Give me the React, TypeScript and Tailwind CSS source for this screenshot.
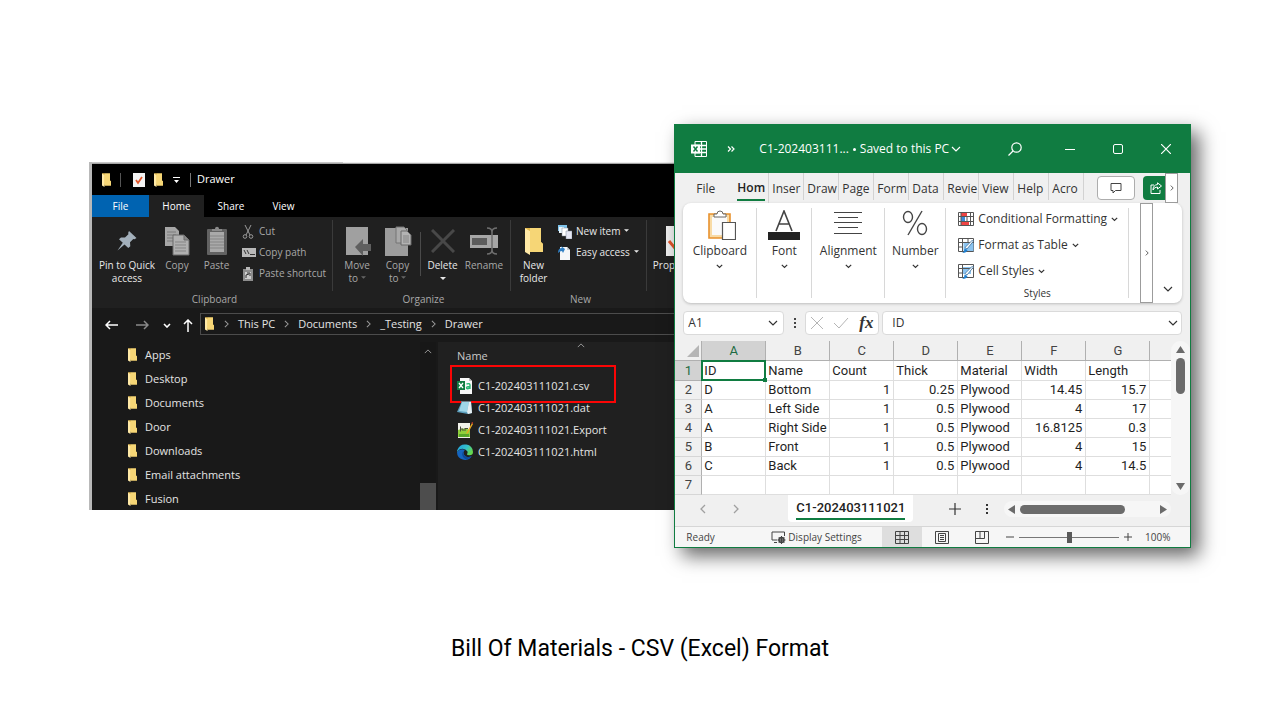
import { useState } from "react";
import type { ReactNode } from "react";

type BomRow = {
  id: string;
  name: string;
  count: string;
  thick: string;
  material: string;
  width: string;
  length: string;
};

const treeFolders = ["Apps", "Desktop", "Documents", "Door", "Downloads", "Email attachments", "Fusion"];

const breadcrumbs = ["This PC", "Documents", "_Testing", "Drawer"];

const ribbonTabs = ["Inser", "Draw", "Page", "Form", "Data", "Revie", "View", "Help", "Acro"];

const columns = ["A", "B", "C", "D", "E", "F", "G"];

const headings = ["ID", "Name", "Count", "Thick", "Material", "Width", "Length"];

const bomRows: BomRow[] = [
  { id: "D", name: "Bottom", count: "1", thick: "0.25", material: "Plywood", width: "14.45", length: "15.7" },
  { id: "A", name: "Left Side", count: "1", thick: "0.5", material: "Plywood", width: "4", length: "17" },
  { id: "A", name: "Right Side", count: "1", thick: "0.5", material: "Plywood", width: "16.8125", length: "0.3" },
  { id: "B", name: "Front", count: "1", thick: "0.5", material: "Plywood", width: "4", length: "15" },
  { id: "C", name: "Back", count: "1", thick: "0.5", material: "Plywood", width: "4", length: "14.5" }
];

/* ---------- shared glyphs ---------- */

function Chevron({ className, d = "M1 1l4 4 4-4" }: { className?: string; d?: string }) {
  return (
    <svg viewBox="0 0 10 6" className={className} fill="none" stroke="currentColor" strokeWidth="1.2">
      <path d={d} />
    </svg>
  );
}

function SmallChevron({ className }: { className?: string }) {
  return (
    <svg viewBox="0 0 7 5" className={`h-[5px] w-[7px] ${className}`} fill="none" stroke="currentColor" strokeWidth="1.2">
      <path d="M.8 .8l2.700 2.700L6.200 .8" />
    </svg>
  );
}

function ChevronRight({ className }: { className?: string }) {
  return (
    <svg viewBox="0 0 6 10" className={className} fill="none" stroke="currentColor" strokeWidth="1.3">
      <path d="M1 1l4 4-4 4" />
    </svg>
  );
}

function Caret({ className }: { className?: string }) {
  return (
    <svg viewBox="0 0 6 3" className={className} fill="currentColor">
      <path d="M0 0h6L3 3z" />
    </svg>
  );
}

function FolderIcon({ className }: { className?: string }) {
  return (
    <svg viewBox="0 0 20 28" className={className}>
      <path d="M1 1h16v14l2 2v8H6z" fill="#f2cd64" />
      <path d="M1 1l5 3v24l-5-3z" fill="#ffe9a6" />
      <path d="M6 4V1h11v14l2 2v8H6z" fill="#f6d676" />
      <path d="M1 1h5v3z" fill="#e3b94b" />
    </svg>
  );
}

/* ---------- file explorer ---------- */

function PinIcon() {
  return (
    <svg viewBox="0 0 20 20" className="size-5">
      <path d="M12 0l7.500 7-2 1.200-1.200-.2-3.300 3.200.3 4-2 1.800-3.800-3.600L.5 19.500l5.300-7.800L2 8.200 4 6.400l4 .2 3.400-3.300-.2-1.600z" fill="#a3b0bb" />
    </svg>
  );
}

function CopyIcon() {
  return (
    <svg viewBox="0 0 26 30" className="h-[30px] w-[26px]">
      <path d="M1 1h10l4 4v15H1z" fill="#a6a6a6" />
      <path d="M3 6h9M3 9h9M3 12h9M3 15h6" stroke="#7a7a7a" />
      <path d="M9 9h11l5 5v15H9z" fill="#b0b0b0" stroke="#6a6a6a" />
      <path d="M20 9v5h5" fill="#888" stroke="#6a6a6a" />
      <path d="M11 16h11M11 19h11M11 22h11M11 25h11" stroke="#858585" />
    </svg>
  );
}

function PasteIcon() {
  return (
    <svg viewBox="0 0 22 30" className="h-[30px] w-[22px]">
      <rect x="1" y="3" width="20" height="26" rx="1" fill="#626262" />
      <path d="M6 5V3h3c0-3 4-3 4 0h3v2z" fill="#8a8a8a" />
      <path d="M4 6h14v20H4z" fill="#a9a9a9" />
      <path d="M4 10h14M4 13h14M4 16h14M4 19h14M4 22h14" stroke="#858585" />
    </svg>
  );
}

function MoveToIcon() {
  return (
    <svg viewBox="0 0 28 30" className="h-[30px] w-7">
      <path d="M3 1h22v28H3z" fill="#a0a0a0" />
      <path d="M12 21l8-8v5h8v7h-8v5z" fill="#5f5f5f" />
    </svg>
  );
}

function CopyToIcon() {
  return (
    <svg viewBox="0 0 28 31" className="h-[31px] w-7">
      <path d="M1 2h23v28H1z" fill="#9c9c9c" />
      <path d="M12 1h8l3 3v13H12z" fill="#a9a9a9" stroke="#757575" />
      <path d="M17 5h6l4 4v10H17z" fill="#b3b3b3" stroke="#6a6a6a" />
      <path d="M19 10h6M19 12h6M19 14h6M19 16h6" stroke="#858585" />
    </svg>
  );
}

function RenameIcon() {
  return (
    <svg viewBox="0 0 30 28" className="h-7 w-[30px]">
      <path d="M1 8h28v13H1z" fill="#a6a6a6" />
      <path d="M3 11h15v7H3z" fill="#5c5c5c" />
      <path d="M18 1q5 0 5 4v18q0 4-5 4M28 1q-5 0-5 4v18q0 4 5 4" fill="none" stroke="#6f6f6f" strokeWidth="1.600" />
    </svg>
  );
}

function RibbonButton({
  icon,
  label,
  className,
  caret = false
}: {
  icon: ReactNode;
  label: ReactNode;
  className?: string;
  caret?: boolean;
}) {
  return (
    <button type="button" className={`flex shrink-0 flex-col items-center pt-[3px] text-center leading-[13px] ${className}`}>
      <span className="flex h-9 items-center justify-center">{icon}</span>
      <span className="whitespace-nowrap">{label}</span>
      {caret ? <Caret className="mt-[5px] h-[3px] w-[6px]" /> : null}
    </button>
  );
}

function RibbonGroup({ label, className, children }: { label: string; className?: string; children: ReactNode }) {
  return (
    <div className={`flex shrink-0 flex-col ${className}`}>
      <div className="mt-[3px] flex h-[71px] border-r border-[#3a3a3a]">{children}</div>
      <div className="text-center leading-[17px] text-[#a8a8a8]">{label}</div>
    </div>
  );
}

function ExplorerTitleBar() {
  return (
    <div className="flex h-[31px] items-center bg-black pl-[9px] text-white">
      <FolderIcon className="h-[14px] w-[11px]" />
      <span className="ml-2 h-[14px] w-px bg-[#555]" />
      <svg viewBox="0 0 12 14" className="ml-[12px] h-[14px] w-3">
        <path d="M0 0h12v14H0z" fill="#f3f3f3" />
        <path d="M3 7l2 3 4-6" fill="none" stroke="#e2562b" strokeWidth="1.800" />
      </svg>
      <FolderIcon className="ml-2 h-[14px] w-[11px]" />
      <svg viewBox="0 0 7 6" className="ml-[9px] h-[6px] w-[7px]" fill="#fff">
        <path d="M0 0h7v1H0zM1 3h5L3.500 6z" />
      </svg>
      <span className="ml-[10px] h-[14px] w-px bg-[#777]" />
      <span className="ml-[6px] text-[11px]">Drawer</span>
    </div>
  );
}

function ExplorerRibbon() {
  return (
    <div className="flex h-[91px] overflow-hidden bg-[#202020] text-[10px] text-[#e8e8e8]">
      <RibbonGroup label="Clipboard" className="w-[241px] pl-[4px]">
        <RibbonButton className="w-[62px]" icon={<PinIcon />} label={<>Pin to Quick<br />access</>} />
        <RibbonButton className="w-[38px] text-[#a8a8a8]" icon={<CopyIcon />} label="Copy" />
        <RibbonButton className="w-[41px] text-[#a8a8a8]" icon={<PasteIcon />} label="Paste" />
        <div className="flex flex-col pt-px pl-[5px] text-[#a8a8a8]">
          <button type="button" className="flex h-[21px] items-center gap-[5px]">
            <svg viewBox="0 0 12 14" className="h-[14px] w-3" fill="none" stroke="#9a9a9a">
              <path d="M3 0l5 10M9 0L4 10" />
              <circle cx="3" cy="11.500" r="1.800" />
              <circle cx="9" cy="11.500" r="1.800" />
            </svg>
            Cut
          </button>
          <button type="button" className="flex h-[21px] items-center gap-[3px]">
            <svg viewBox="0 0 14 9" className="h-[9px] w-[14px]">
              <path d="M0 0h14v9H0z" fill="#b8b8b8" />
              <path d="M2 2l2 4M5 2l2 4M8 6.500h5" stroke="#333" />
            </svg>
            Copy path
          </button>
          <button type="button" className="flex h-[21px] items-center gap-[5px]">
            <svg viewBox="0 0 12 14" className="h-[14px] w-3">
              <path d="M1 2h10v12H1z" fill="#8d8d8d" />
              <path d="M4 0h4v3H4z" fill="#b8b8b8" />
              <path d="M3 5h6v7H3z" fill="#cfcfcf" />
              <path d="M4 11V8l3-1M5 6h3v3" fill="none" stroke="#333" />
            </svg>
            <span className="whitespace-nowrap">Paste shortcut</span>
          </button>
        </div>
      </RibbonGroup>
      <RibbonGroup label="Organize" className="w-[178px] pl-[3px]">
        <RibbonButton
          className="w-[42px] text-[#a8a8a8]"
          icon={<MoveToIcon />}
          label={<>Move<br />to <Caret className="mb-1 inline h-[3px] w-[5px] text-[#666]" /></>}
        />
        <RibbonButton
          className="w-[39px] text-[#a8a8a8]"
          icon={<CopyToIcon />}
          label={<>Copy<br />to <Caret className="mb-1 inline h-[3px] w-[5px] text-[#666]" /></>}
        />
        <span className="mt-3 ml-[3px] h-11 w-px shrink-0 bg-[#4a4a4a]" />
        <RibbonButton
          className="w-[43px]"
          icon={
            <svg viewBox="0 0 24 24" className="size-6" stroke="#484848" strokeWidth="3">
              <path d="M1 1l22 22M23 1L1 23" />
            </svg>
          }
          label="Delete"
          caret
        />
        <RibbonButton className="w-[40px] text-[#a8a8a8]" icon={<RenameIcon />} label="Rename" />
      </RibbonGroup>
      <RibbonGroup label="New" className="w-[136px] pl-[3px]">
        <RibbonButton className="w-[39px]" icon={<FolderIcon className="h-7 w-5" />} label={<>New<br />folder</>} />
        <div className="flex flex-col pt-px pl-[5px]">
          <button type="button" className="flex h-[21px] items-center gap-[4px] whitespace-nowrap">
            <svg viewBox="0 0 14 14" className="size-[14px]">
              <path d="M0 0h9v6H0z" fill="#7fc3ea" />
              <path d="M1 2h5v6H1z" fill="#e9f5fc" />
              <path d="M4 3h6v8H4z" fill="#fff" stroke="#7c8b99" strokeWidth=".5" />
              <path d="M8 6h6v8H8z" fill="#e5e7f4" stroke="#7c8b99" strokeWidth=".5" />
            </svg>
            New item
            <Caret className="mb-[2px] h-[3px] w-[5px]" />
          </button>
          <button type="button" className="flex h-[21px] items-center gap-[4px] whitespace-nowrap">
            <svg viewBox="0 0 14 14" className="size-[14px]">
              <path d="M2 1h7l3 3v10H2z" fill="#f5f7f9" />
              <path d="M9 1v3h3" fill="#c6cdd4" />
              <path d="M0 7q0-5 4-5l-1-2 4 3-2 4-1-2q-2 0-4 2z" fill="#2f7fc4" />
            </svg>
            Easy access
            <Caret className="mb-[2px] h-[3px] w-[5px]" />
          </button>
        </div>
      </RibbonGroup>
      <RibbonButton
        className="mt-[3px] w-[60px]"
        icon={
          <svg viewBox="0 0 22 30" className="h-[30px] w-[22px]">
            <path d="M0 0h22v30H0z" fill="#efefef" />
            <path d="M3 15l5 6 9-13" fill="none" stroke="#e2562b" strokeWidth="3" />
          </svg>
        }
        label="Properties"
      />
    </div>
  );
}

function AddressBar() {
  return (
    <div className="flex h-[34px] items-center bg-[#191919] text-[#e4e4e4]">
      <div className="flex w-[108px] shrink-0 items-center pl-[13px]">
        <button type="button" aria-label="Back">
          <svg viewBox="0 0 13 10" className="h-[10px] w-[13px]" fill="none" stroke="#fff" strokeWidth="1.500">
            <path d="M13 5H1M5 1L1 5l4 4" />
          </svg>
        </button>
        <button type="button" aria-label="Forward" className="ml-[18px]">
          <svg viewBox="0 0 13 10" className="h-[10px] w-[13px]" fill="none" stroke="#8a8a8a" strokeWidth="1.500">
            <path d="M0 5h12M8 1l4 4-4 4" />
          </svg>
        </button>
        <button type="button" aria-label="Recent" className="ml-[14px]">
          <svg viewBox="0 0 8 5" className="h-[5px] w-2" fill="none" stroke="#fff" strokeWidth="1.600">
            <path d="M1 1l3 3 3-3" />
          </svg>
        </button>
        <button type="button" aria-label="Up" className="ml-3">
          <svg viewBox="0 0 10 13" className="h-[13px] w-[10px]" fill="none" stroke="#fff" strokeWidth="1.500">
            <path d="M5 13V1M1 5l4-4 4 4" />
          </svg>
        </button>
      </div>
      <nav className="mb-[2px] flex h-[22px] flex-1 items-center border-y border-l border-[#4c4c4c] pl-[3px] text-[11px] whitespace-nowrap">
        <FolderIcon className="h-[14px] w-[11px] shrink-0" />
        {breadcrumbs.map((crumb) => (
          <span key={crumb} className="flex items-center">
            <ChevronRight className="mr-[9px] ml-[9px] h-2 w-[5px] text-[#9a9a9a]" />
            <a href="#">{crumb}</a>
          </span>
        ))}
      </nav>
    </div>
  );
}

const files = [
  {
    name: "C1-202403111021.csv",
    icon: (
      <svg viewBox="0 0 16 16" className="size-4">
        <path d="M3 0h9l3 3v13H3z" fill="#f8f8f8" />
        <path d="M12 0v3h3z" fill="#bdbdbd" />
        <path d="M0 3h8v9H0z" fill="#117a41" />
        <path d="M2 5l4 5M6 5l-4 5" stroke="#fff" strokeWidth="1.300" />
        <path d="M9.500 6q3.500-1 3.500 1v4M13 8.500q-3.500 0-3.500 1.300 0 1.700 3.500 .2" fill="none" stroke="#2bb673" strokeWidth="1.400" />
      </svg>
    )
  },
  {
    name: "C1-202403111021.dat",
    icon: (
      <svg viewBox="0 0 16 16" className="size-4">
        <path d="M5 1h9l1 12-4 1-11-2z" fill="#5d9fbd" />
        <path d="M5 2h7l-2 10-8-1z" fill="#9fd6e8" />
        <path d="M12 2l2 0 1 11-4 1-1-2z" fill="#e7eef1" />
        <path d="M4 1.500h10" stroke="#70808a" />
      </svg>
    )
  },
  {
    name: "C1-202403111021.Export",
    icon: (
      <svg viewBox="0 0 16 16" className="size-4">
        <path d="M1 1h12v15H1z" fill="#f2f2ea" />
        <path d="M1 8q6-3 12 0v7H1z" fill="#8fd03c" />
        <path d="M2 12h10v3H2z" fill="#57a629" />
        <path d="M3.500 4.500v5M3.500 7h2.500v2M8 6v3M8 6.500h3" fill="none" stroke="#4c4c3c" />
        <path d="M15 1l-5 9-1 2 2-1 5-9z" fill="#e9a820" />
        <path d="M14 1l2 1V0z" fill="#cc3a2a" />
      </svg>
    )
  },
  {
    name: "C1-202403111021.html",
    icon: (
      <svg viewBox="0 0 24 24" className="size-4">
        <defs>
          <linearGradient id="edge-top" x1="0" x2="1" y1="0" y2=".5">
            <stop offset="0" stopColor="#1e9de0" />
            <stop offset=".6" stopColor="#35c1c9" />
            <stop offset="1" stopColor="#66d84e" />
          </linearGradient>
        </defs>
        <path d="M0 12a12 12 0 0022 6.500q-4 2-8 .5-5-2-4-7 .5-2 2-3Q5 6 0 12z" fill="#1565c0" />
        <path d="M1 8A12 12 0 0124 12q0 5-5.500 5-4 0-3.500-2 1.500-1.500.5-4Q13 7 8.500 7 3 7 0 12q0-2 1-4z" fill="url(#edge-top)" />
        <path d="M9 11q-4 8 5 12.500 5-.8 8-5-4 2-8 .5-5-2-5-8z" fill="#0d4a9a" />
      </svg>
    )
  }
];

function ExplorerBody() {
  return (
    <div className="flex h-[168px] bg-[#191919] text-[11px] text-[#e4e4e4]">
      <ul className="h-full w-[328px] shrink-0 overflow-hidden pt-px">
        {treeFolders.map((folder) => (
          <li key={folder} className="flex h-6 items-center gap-[7px] pl-[35px]">
            <FolderIcon className="h-[14px] w-[11px]" />
            {folder}
          </li>
        ))}
      </ul>
      <div className="flex w-4 shrink-0 flex-col items-center justify-between bg-[#171717] pt-[7px]">
        <Chevron className="h-[5px] w-2 text-[#9a9a9a]" d="M1 5l4-4 4 4" />
        <div className="h-[27px] w-full bg-[#4d4d4d]" />
      </div>
      <div className="ml-[2px] flex-1 bg-[#202020] pl-[19px]">
        <div className="relative h-7 leading-7">
          <span className="text-[#c9c9c9]">Name</span>
          <Chevron className="absolute top-px left-[120px] h-[5px] w-2 text-[#9a9a9a]" d="M1 5l4-4 4 4" />
        </div>
        <ul className="pt-[5px]">
          {files.map((file, index) => (
            <li key={file.name} className="relative flex h-[22px] items-center gap-[5px]">
              {file.icon}
              {file.name}
              {index === 0 ? (
                <span className="absolute -top-[10px] -left-[7px] h-[38px] w-[166px] border-2 border-[#fb0505]" />
              ) : null}
            </li>
          ))}
        </ul>
      </div>
    </div>
  );
}

function ExplorerWindow() {
  return (
    <section className="mt-[38px] min-w-0 flex-[585] overflow-hidden border-l-3 border-[#b9b9b9] font-['Open_Sans',sans-serif]">
      <div className="flex h-[2px] bg-[#a5a5a5]">
        <div className="h-px w-[251px] bg-[#c6c6c6]" />
        <div className="h-px flex-1 bg-[#ececec]" />
      </div>
      <ExplorerTitleBar />
      <div className="flex h-[22px] bg-black text-[10px] text-white">
        <button type="button" className="w-[57px] bg-[#0063b1]">File</button>
        <button type="button" className="w-[55px] bg-[#202020]">Home</button>
        <button type="button" className="w-[54px]">Share</button>
        <button type="button" className="w-[51px]">View</button>
      </div>
      <ExplorerRibbon />
      <AddressBar />
      <ExplorerBody />
    </section>
  );
}

/* ---------- spreadsheet ---------- */

function ExcelTitleBar() {
  return (
    <header className="flex h-12 items-center bg-[#107c41] pl-4 text-white">
      <svg viewBox="0 0 16 16" className="size-4 shrink-0">
        <path d="M4 .5h11.500v15H4z" fill="none" stroke="#fff" />
        <path d="M4 4.500h12M4 8h12M4 11.500h12M10.500 0v16" stroke="#fff" strokeWidth="1.300" />
        <path d="M0 3.500h9v9H0z" fill="#fff" />
        <path d="M2.500 5.500l4 5M6.500 5.500l-4 5" stroke="#107c41" strokeWidth="1.400" />
      </svg>
      <svg viewBox="0 0 8 6" className="ml-5 h-[6px] w-2 shrink-0" fill="none" stroke="#fff" strokeWidth="1.200">
        <path d="M1 .5L3.500 3 1 5.500M4.500 .5L7 3 4.500 5.500" />
      </svg>
      <h1 className="ml-6 flex items-center text-[12px] whitespace-nowrap">
        C1-202403111...
        <span className="mx-[4px] size-[3px] rounded-full bg-white" />
        Saved to this PC
        <Chevron className="ml-[2px] h-[6px] w-[10px]" />
      </h1>
      <div className="ml-auto flex items-center">
        <button type="button" aria-label="Search" className="flex w-12 justify-center">
          <svg viewBox="0 0 14 14" className="size-[14px]" fill="none" stroke="#fff" strokeWidth="1.200">
            <circle cx="8.500" cy="5.500" r="4.700" />
            <path d="M5 9l-4.500 4.500" />
          </svg>
        </button>
        <button type="button" aria-label="Minimize" className="ml-[7px] flex w-12 justify-center">
          <span className="h-px w-[10px] bg-white" />
        </button>
        <button type="button" aria-label="Maximize" className="flex w-12 justify-center">
          <span className="size-[10px] rounded-[2px] border border-white" />
        </button>
        <button type="button" aria-label="Close" className="flex w-12 justify-center">
          <svg viewBox="0 0 10 10" className="size-[10px]" stroke="#fff" strokeWidth="1.200">
            <path d="M0 0l10 10M10 0L0 10" />
          </svg>
        </button>
      </div>
    </header>
  );
}

function ExcelTabs() {
  return (
    <div className="flex h-[30px] items-start text-[12px] text-[#333]">
      <button type="button" className="ml-[21px] h-[31px] w-[41px] text-left">File</button>
      <div className="flex h-[30px] w-[32px] items-start border-r border-[#d2d2d2] pt-[3px]">
        <button type="button" className="h-[25px] w-[28px] overflow-hidden border-b-2 border-[#107c41] pt-px text-left font-semibold text-[#222]">
          Hom
        </button>
      </div>
      {ribbonTabs.map((tab) => (
        <div key={tab} className="flex h-[27px] w-[35px] border-r border-[#d2d2d2] pt-[4px] pl-[3px]">
          <button type="button" className="h-6 w-[31px] overflow-hidden text-left whitespace-nowrap">
            {tab}
          </button>
        </div>
      ))}
      <div className="ml-auto flex">
        <button
          type="button"
          aria-label="Comments"
          className="mt-[3px] flex h-6 w-[38px] items-center justify-center rounded-[4px] border border-[#adadad] bg-white"
        >
          <svg viewBox="0 0 12 11" className="h-[11px] w-3" fill="none" stroke="#444">
            <path d="M1 .5h10v7H5.500L3 10V7.500H1z" />
          </svg>
        </button>
        <button type="button" aria-label="Share" className="mt-[3px] ml-2 flex h-6 w-[22px] items-center justify-center rounded-l-[4px] bg-[#107c41] pl-1">
          <svg viewBox="0 0 12 12" className="size-3" fill="none" stroke="#fff">
            <path d="M4 3H1v8.500h9V8M7.500 .8L11.500 4 7.500 7V5Q4 5 3 8q0-5 4.500-5.500z" />
          </svg>
        </button>
        <button type="button" aria-label="Scroll tabs" className="mr-3 flex h-[30px] w-[13px] items-center justify-center border border-[#9c9c9c] bg-white">
          <ChevronRight className="h-[6px] w-[4px]" />
        </button>
      </div>
    </div>
  );
}

function ExcelGroupButton({ icon, label, className }: { icon: ReactNode; label: string; className?: string }) {
  return (
    <button type="button" className={`my-[5px] flex shrink-0 flex-col items-center border-r border-[#d8d8d8] text-[12px] ${className}`}>
      <span className="flex h-[34px] items-center">{icon}</span>
      <span className="leading-[18px]">{label}</span>
      <SmallChevron className="mt-1" />
    </button>
  );
}

function BrushTableIcon({ filled = false }: { filled?: boolean }) {
  return (
    <svg viewBox="0 0 16 16" className="size-4">
      <path d="M.5 1.500h15v13H.5z" fill="#fff" stroke="#555" />
      {filled ? (
        <path d="M4 4h9v7H4z" fill="#8cc4f0" />
      ) : (
        <path d="M5.500 6h10v8h-10z" fill="#8cc4f0" />
      )}
      <path d="M4.500 1v13M.5 5.500h15M.5 10h4" fill="none" stroke="#555" />
      {filled ? null : <path d="M10 1v5" stroke="#555" />}
      <path d="M15.500 4L9 12l-2-1.500L14.500 3z" fill="#fff" stroke="#3b6e9c" strokeWidth=".8" />
      <path d="M4 16q2.500-1 2.500-4.500L9.500 13Q9 16 4 16z" fill="#1e7fd0" />
    </svg>
  );
}

function ExcelRibbon() {
  return (
    <div className="mx-2 flex h-[100px] rounded-lg bg-white text-[#333] shadow-[0_1px_3px_rgba(0,0,0,0.22)]">
      <ExcelGroupButton
        className="w-[74px]"
        label="Clipboard"
        icon={
          <svg viewBox="0 0 28 30" className="ml-[5px] h-[30px] w-7" fill="none">
            <path d="M1 4h21v24H1z" fill="#f8dba6" stroke="#e8912d" strokeWidth="1.600" />
            <path d="M4 7h15v18H4z" fill="#fafafa" />
            <path d="M6 7V4h3q0-3 3-3t3 3h3v3z" fill="#fff" stroke="#666" />
            <path d="M14.500 12.500h13v17h-13z" fill="#fff" stroke="#555" strokeWidth="1.200" />
          </svg>
        }
      />
      <ExcelGroupButton
        className="w-[55px]"
        label="Font"
        icon={
          <svg viewBox="0 0 32 30" className="h-[30px] w-8">
            <path d="M8 21L16 1l8 20M11 14h10" fill="none" stroke="#444" strokeWidth="1.600" />
            <path d="M0 22h32v8H0z" fill="#222" />
          </svg>
        }
      />
      <ExcelGroupButton
        className="w-[73px]"
        label="Alignment"
        icon={
          <svg viewBox="0 0 28 24" className="mb-1 h-6 w-7" stroke="#444" strokeWidth="1.200">
            <path d="M0 1.500h28M4 6.500h20M0 11.500h28M4 16.500h20M0 22.500h28" />
          </svg>
        }
      />
      <ExcelGroupButton
        className="w-[61px]"
        label="Number"
        icon={
          <svg viewBox="0 0 26 26" className="mb-1 size-[26px]" fill="none" stroke="#444" strokeWidth="1.400">
            <ellipse cx="6" cy="7" rx="4.500" ry="5.500" />
            <ellipse cx="20" cy="19" rx="4.500" ry="5.500" />
            <path d="M20 1L6 25" />
          </svg>
        }
      />
      <div className="my-[5px] flex w-[183px] shrink-0 flex-col border-r border-[#d8d8d8] pl-3 text-[12px] whitespace-nowrap">
        <button type="button" className="mt-[-2px] flex h-[26px] shrink-0 items-center gap-1">
          <svg viewBox="0 0 16 16" className="size-4">
            <path d="M.5 1.500h15v13H.5z" fill="#fff" stroke="#555" />
            <path d="M3 2h6v3.500H3zM3 10.500h8V14H3z" fill="#ef4444" />
            <path d="M3 5.500h4v5H3z" fill="#3b8ad8" />
            <path d="M3 1v13M9 5.500V10M12.500 1v13M.5 5.500h15M.5 10.500h15" stroke="#555" fill="none" />
          </svg>
          Conditional Formatting
          <SmallChevron />
        </button>
        <button type="button" className="flex h-[26px] shrink-0 items-center gap-1">
          <BrushTableIcon />
          Format as Table
          <SmallChevron />
        </button>
        <button type="button" className="flex h-[26px] shrink-0 items-center gap-1">
          <BrushTableIcon filled />
          Cell Styles
          <SmallChevron />
        </button>
        <span className="pr-3 text-center text-[10px] leading-[18px]">Styles</span>
      </div>
      <div className="ml-auto flex">
        <button type="button" aria-label="Scroll ribbon" className="flex w-[13px] items-center justify-center border border-[#9c9c9c]">
          <ChevronRight className="h-[6px] w-[4px]" />
        </button>
        <button type="button" aria-label="Ribbon options" className="flex w-[29px] items-end justify-center pb-[11px]">
          <Chevron className="h-[6px] w-[10px]" />
        </button>
      </div>
    </div>
  );
}

function FormulaBar() {
  return (
    <div className="mx-2 mt-2 flex h-6 text-[12px] text-[#333]">
      <div className="flex w-[101px] shrink-0 items-center rounded-[4px] border border-[#dadada] bg-white pr-[5px] pl-1">
        <input aria-label="Name box" defaultValue="A1" className="w-0 flex-1 outline-none" />
        <Chevron className="h-[6px] w-[10px]" />
      </div>
      <span className="flex w-[21px] flex-col items-center justify-center gap-[2px]">
        <span className="size-[2px] bg-[#444]" />
        <span className="size-[2px] bg-[#444]" />
        <span className="size-[2px] bg-[#444]" />
      </span>
      <div className="flex w-[74px] shrink-0 items-center rounded-[4px] border border-[#dadada] bg-white pl-[5px]">
        <svg viewBox="0 0 12 12" className="size-3" stroke="#b5b5b5">
          <path d="M0 0l12 12M12 0L0 12" />
        </svg>
        <svg viewBox="0 0 16 12" className="ml-[10px] h-3 w-4" fill="none" stroke="#b5b5b5">
          <path d="M1 6l5 5L15 1" />
        </svg>
        <button type="button" className="ml-[10px] font-['Liberation_Serif',serif] text-[17px] leading-5 font-bold italic">fx</button>
      </div>
      <div className="ml-[3px] flex flex-1 items-center rounded-[4px] border border-[#dadada] bg-white pr-[3px] pl-[9px]">
        <input aria-label="Formula" defaultValue="ID" className="w-0 flex-1 outline-none" />
        <Chevron className="h-[6px] w-[10px]" />
      </div>
    </div>
  );
}

const numeric = "border-r border-b border-[#dedede] pr-[3px] text-right";
const textual = "border-r border-b border-[#dedede] pl-[2px] text-left";
const rowHead = "border-r border-b border-r-[#b0b0b0] border-b-[#d6d6d6] bg-[#f0f0f0] text-center font-normal text-[#444]";

function Sheet() {
  return (
    <div className="mt-[6px] flex">
      <table className="flex-1 table-fixed border-separate border-spacing-0 bg-white font-[Roboto,sans-serif] text-[13px] leading-[18px] whitespace-nowrap text-[#1f1f1f]">
        <colgroup>
          <col className="w-[27px]" />
          {columns.map((column) => (
            <col key={column} className="w-16" />
          ))}
          <col />
        </colgroup>
        <thead>
          <tr className="h-5 bg-[#f0f0f0] text-[#444]">
            <th className="border-r border-b border-[#b0b0b0] p-0">
              <svg viewBox="0 0 12 12" className="mr-[2px] ml-auto size-3" fill="#b5b5b5">
                <path d="M12 0v12H0z" />
              </svg>
            </th>
            {columns.map((column, index) => (
              <th
                key={column}
                scope="col"
                className={`border-r border-b border-[#b0b0b0] p-0 font-normal ${index === 0 ? "bg-[#d2d2d2] text-[#1e6b43]" : ""}`}
              >
                {column}
              </th>
            ))}
            <td className="border-b border-[#b0b0b0]" />
          </tr>
        </thead>
        <tbody>
          <tr className="h-5">
            <th scope="row" className="border-r border-b border-[#b0b0b0] bg-[#d2d2d2] text-center font-normal text-[#1e6b43]">1</th>
            {headings.map((heading, index) => (
              <td key={heading} className={`${textual} ${index === 0 ? "relative" : ""}`}>
                {heading}
                {index === 0 ? (
                  <>
                    <span className="absolute -inset-px border-2 border-[#107c41]" />
                    <span className="absolute -right-[2px] -bottom-[2px] size-1 bg-[#107c41]" />
                  </>
                ) : null}
              </td>
            ))}
            <td className="border-b border-[#dedede]" />
          </tr>
          {bomRows.map((row, index) => (
            <tr key={row.name} className="h-[19px]">
              <th scope="row" className={rowHead}>{index + 2}</th>
              <td className={textual}>{row.id}</td>
              <td className={textual}>{row.name}</td>
              <td className={numeric}>{row.count}</td>
              <td className={numeric}>{row.thick}</td>
              <td className={textual}>{row.material}</td>
              <td className={numeric}>{row.width}</td>
              <td className={numeric}>{row.length}</td>
              <td className="border-b border-[#dedede]" />
            </tr>
          ))}
          <tr className="h-[19px]">
            <th scope="row" className={rowHead}>7</th>
            {columns.map((column) => (
              <td key={column} className={textual} />
            ))}
            <td className="border-b border-[#dedede]" />
          </tr>
        </tbody>
      </table>
      <div className="flex w-[19px] flex-col items-center rounded-full bg-[#f6f6f6] py-[5px]">
        <svg viewBox="0 0 9 7" className="h-[7px] w-[9px]" fill="#6b6b6b"><path d="M4.500 0L9 7H0z" /></svg>
        <div className="mt-[5px] h-9 w-[9px] rounded-full bg-[#6b6b6b]" />
        <svg viewBox="0 0 9 7" className="mt-auto h-[7px] w-[9px]" fill="#6b6b6b"><path d="M4.500 7L9 0H0z" /></svg>
      </div>
    </div>
  );
}

function SheetTabs() {
  return (
    <div className="flex h-[31px] items-start text-[#333]">
      <div className="flex h-[28px] w-[113px] shrink-0 items-center pl-[25px] text-[#a0a0a0]">
        <ChevronRight className="h-[10px] w-[6px] rotate-180" />
        <ChevronRight className="ml-[27px] h-[10px] w-[6px]" />
      </div>
      <button type="button" className="h-[27px] rounded-b-[4px] bg-white px-2 font-[Roboto,sans-serif] text-[13px] font-medium text-[#222]">
        <span className="block border-b-2 border-[#107c41] leading-[20px]">C1-202403111021</span>
      </button>
      <div className="ml-auto flex h-[28px] items-center pr-[19px]">
        <button type="button" aria-label="New sheet">
          <svg viewBox="0 0 12 12" className="size-3" stroke="#333" strokeWidth="1.200"><path d="M6 0v12M0 6h12" /></svg>
        </button>
        <span className="ml-[25px] flex flex-col gap-[2px]">
          <span className="size-[2px] bg-[#333]" />
          <span className="size-[2px] bg-[#333]" />
          <span className="size-[2px] bg-[#333]" />
        </span>
        <div className="ml-[16px] flex h-4 w-[167px] items-center rounded-full bg-[#f6f6f6] px-1">
          <svg viewBox="0 0 7 9" className="h-[9px] w-[7px]" fill="#6b6b6b"><path d="M0 4.500L7 0v9z" /></svg>
          <div className="ml-[5px] h-[9px] w-[105px] rounded-full bg-[#6b6b6b]" />
          <svg viewBox="0 0 7 9" className="ml-auto h-[9px] w-[7px]" fill="#6b6b6b"><path d="M7 4.500L0 0v9z" /></svg>
        </div>
      </div>
    </div>
  );
}

function StatusBar() {
  const [zoom, setZoom] = useState(50);

  return (
    <footer className="flex h-[21px] items-center border-t border-[#d6d6d6] bg-[#f6f6f6] text-[10px] text-[#444]">
      <span className="w-[96px] shrink-0 pl-[11px]">Ready</span>
      <button type="button" className="flex items-center gap-[2px] whitespace-nowrap">
        <svg viewBox="0 0 15 13" className="h-[13px] w-[15px]" fill="none" stroke="#444">
          <path d="M13.500 5V1H1v8h5M3 11.500h3" />
          <circle cx="10.500" cy="9" r="2.500" strokeWidth="1.500" />
          <path d="M10.500 5v8M6.500 9h8M7.800 6.200l5.500 5.500M13.300 6.200l-5.500 5.500" />
        </svg>
        Display Settings
      </button>
      <div className="ml-auto flex h-full items-center">
        <button type="button" aria-label="Normal view" className="flex h-full w-10 items-center justify-center bg-[#dedede]">
          <svg viewBox="0 0 14 13" className="h-[13px] w-[14px]" fill="none" stroke="#444">
            <path d="M.5 .5h13v12H.5zM.5 4.500h13M.5 8.500h13M5 .5v12M9.500 .5v12" />
          </svg>
        </button>
        <button type="button" aria-label="Page layout view" className="flex h-full w-10 items-center justify-center">
          <svg viewBox="0 0 14 13" className="h-[13px] w-[14px]" fill="none" stroke="#444">
            <path d="M.5 .5h13v12H.5zM3.500 2.500h7v8h-7zM5 4.500h4M5 6.500h4M5 8.500h4" />
          </svg>
        </button>
        <button type="button" aria-label="Page break view" className="flex h-full w-10 items-center justify-center">
          <svg viewBox="0 0 14 13" className="h-[13px] w-[14px]" fill="none" stroke="#444">
            <path d="M.5 .5h13v12H.5zM.5 7.500h9v-7M5 .5v7" />
          </svg>
        </button>
        <button type="button" aria-label="Zoom out" className="ml-1">
          <svg viewBox="0 0 8 8" className="size-2" stroke="#444"><path d="M0 4h8" /></svg>
        </button>
        <input
          type="range"
          aria-label="Zoom"
          min={0}
          max={100}
          value={zoom}
          onChange={(event) => setZoom(Number(event.target.value))}
          className="mx-[5px] h-px w-[100px] appearance-none bg-[#777] [&::-webkit-slider-thumb]:h-[11px] [&::-webkit-slider-thumb]:w-[5px] [&::-webkit-slider-thumb]:appearance-none [&::-webkit-slider-thumb]:bg-[#5a5a5a]"
        />
        <button type="button" aria-label="Zoom in">
          <svg viewBox="0 0 8 8" className="size-2" stroke="#444"><path d="M0 4h8M4 0v8" /></svg>
        </button>
        <span className="w-[58px] pl-[13px]">100%</span>
      </div>
    </footer>
  );
}

function ExcelWindow() {
  return (
    <section className="relative min-w-0 flex-[517] self-start border border-[#107c41] bg-[#f0f0f0] font-['Open_Sans',sans-serif] shadow-[8px_8px_18px_rgba(0,0,0,0.6)]">
      <ExcelTitleBar />
      <ExcelTabs />
      <ExcelRibbon />
      <FormulaBar />
      <Sheet />
      <SheetTabs />
      <StatusBar />
    </section>
  );
}

export default function App() {
  return (
    <main className="min-h-screen bg-white pt-[124px]">
      <div className="flex items-start px-[89px]">
        <ExplorerWindow />
        <ExcelWindow />
      </div>
      <p className="mt-[85px] text-center font-[Roboto,sans-serif] text-[23px] leading-8 text-black">
        Bill Of Materials - CSV (Excel) Format
      </p>
    </main>
  );
}
